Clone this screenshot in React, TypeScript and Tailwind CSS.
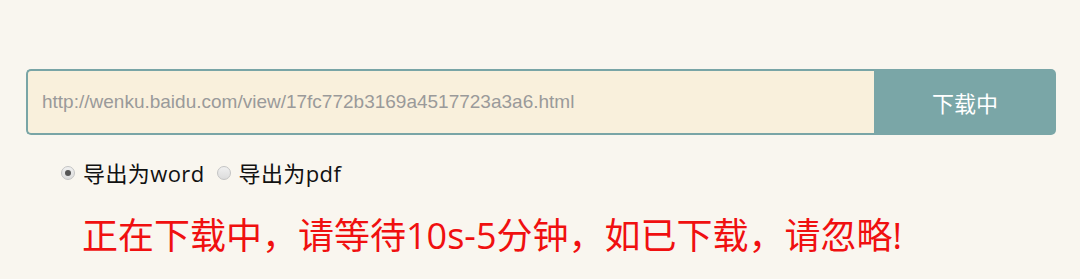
import React from "react";

function Radio({ checked }: { checked: boolean }) {
  return (
    <span className="flex h-[14px] w-[14px] items-center justify-center rounded-full border border-[#c4c4c4] bg-gradient-to-b from-[#f0f0f0] to-[#dcdcdc]">
      {checked && <span className="h-[6px] w-[6px] rounded-full bg-[#555]" />}
    </span>
  );
}

export default function App() {
  return (
    <div className="h-[279px] w-[1080px] bg-[#f9f6ef] pt-[69px] pl-[26px] pr-[24px]">
      <div className="flex h-[66px] w-[1030px]">
        <div className="flex flex-1 items-center rounded-l-[5px] border-2 border-r-0 border-[#79a5a6] bg-[#f9f0dc] pl-[14px]">
          <span className="font-['Liberation_Sans',sans-serif] text-[19px] text-[#9a9a9a]">
            http://wenku.baidu.com/view/17fc772b3169a4517723a3a6.html
          </span>
        </div>
        <button className="flex w-[182px] items-center justify-center rounded-r-[5px] bg-[#7aa6a7] font-['Noto_Sans_CJK_SC',sans-serif] text-[22px] text-white">
          下载中
        </button>
      </div>
      <div className="mt-[23px] flex items-center pl-[35px] font-['Open_Sans','Noto_Sans_CJK_SC',sans-serif] text-[22px] leading-[30px] tracking-[0.4px] text-[#111]">
        <label className="flex items-center gap-[8px]">
          <Radio checked />
          <span>导出为word</span>
        </label>
        <label className="ml-[12px] flex items-center gap-[8px]">
          <Radio checked={false} />
          <span>导出为pdf</span>
        </label>
      </div>
      <div className="mt-[23px] pl-[56px] font-['Open_Sans','Noto_Sans_CJK_SC',sans-serif] text-[36px] leading-[50px] text-[#f01010]">
        正在下载中，请等待10s-5分钟，如已下载，请忽略!
      </div>
    </div>
  );
}
